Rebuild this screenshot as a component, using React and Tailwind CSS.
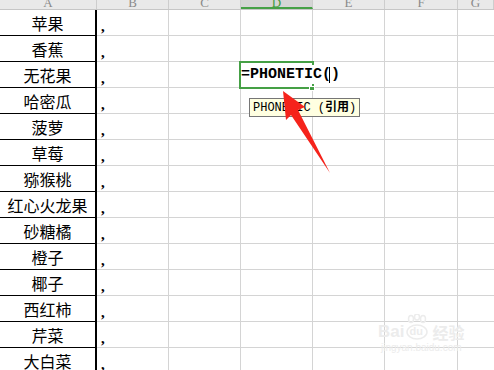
import React from "react";

const fruits = ["苹果", "香蕉", "无花果", "哈密瓜", "菠萝", "草莓", "猕猴桃", "红心火龙果", "砂糖橘", "橙子", "椰子", "西红柿", "芹菜", "大白菜"];
const cols = [
  { key: "A", w: "w-[97px]" },
  { key: "B", w: "w-[72px]" },
  { key: "C", w: "w-[72px]" },
  { key: "D", w: "w-[72px]" },
  { key: "E", w: "w-[72px]" },
  { key: "F", w: "w-[73px]" },
  { key: "G", w: "flex-1" },
];

function HeaderRow() {
  return (
    <div className="flex h-[10px] overflow-hidden border-b border-[#c6c6c6] bg-[#e9e9e9]">
      {cols.map((c) => (
        <div
          key={c.key}
          className={`${c.w} shrink-0 flex justify-center border-r border-[#cdcdcd] ${c.key === "D" ? "bg-[#d5d5d5] text-[#3f9b3f] border-b-2 border-b-[#45a045]" : "text-[#8a8a8a]"}`}
        >
          <span className="-mt-[4px] text-[13px] leading-[13px]" style={{ fontFamily: "'Liberation Serif', serif" }}>
            {c.key}
          </span>
        </div>
      ))}
    </div>
  );
}

function Row({ name }) {
  return (
    <div className="flex h-[26px]">
      <div className="w-[97px] shrink-0 border-r-2 border-b border-black flex items-center justify-center text-[16px] text-black" style={{ fontFamily: "'Noto Sans CJK SC', sans-serif" }}>
        {name}
      </div>
      <div className="w-[72px] shrink-0 border-r border-b border-[#d4d4d4] pl-[4px] flex items-center">
        <span className="font-bold text-[15px] leading-none mt-[7px]" style={{ fontFamily: "'Liberation Serif', serif" }}>,</span>
      </div>
      <div className="w-[72px] shrink-0 border-r border-b border-[#d4d4d4]" />
      <div className="w-[72px] shrink-0 border-r border-b border-[#d4d4d4]" />
      <div className="w-[72px] shrink-0 border-r border-b border-[#d4d4d4]" />
      <div className="w-[73px] shrink-0 border-r border-b border-[#d4d4d4]" />
      <div className="flex-1 border-b border-[#d4d4d4]" />
    </div>
  );
}

export default function App() {
  return (
    <div className="relative w-[494px] h-[370px] overflow-hidden bg-white">
      <HeaderRow />
      {fruits.map((f) => (
        <Row key={f} name={f} />
      ))}

      {/* active cell D3 */}
      <div className="absolute left-[239px] top-[61px] w-[75px] h-[28px] border-2 border-[#45a045]" />
      <div className="absolute left-[309px] top-[86px] w-[6px] h-[5px] bg-[#45a045] border border-white" />
      <div className="absolute left-[241px] top-[65px] flex items-center bg-white pr-[2px] text-[15px] font-bold text-black leading-[19px]" style={{ fontFamily: "'Liberation Mono', monospace" }}>
        <span>=PHONETIC(</span>
        <span className="w-px h-[16px] bg-black -ml-[2px] mr-[1px]" />
        <span>)</span>
      </div>

      {/* function hint */}
      <div className="absolute left-[249px] top-[98px] h-[19px] px-[3px] flex items-center bg-[#ffffe1] border border-[#767676] text-[12px] text-black" style={{ fontFamily: "'Liberation Mono', 'Noto Sans CJK SC', monospace" }}>
        PHONETIC (<span className="font-bold">引用</span>)
      </div>

      {/* red arrow */}
      <svg className="absolute left-0 top-0 pointer-events-none" width="494" height="370" viewBox="0 0 494 370">
        <polygon points="283,91 305,107 298,110 330,173 291,115 286,120" fill="#f5231b" />
      </svg>

      {/* watermark */}
      <div className="absolute left-[378px] top-[314px] flex flex-col items-center text-[#ececec] pointer-events-none">
        <div className="flex items-end gap-[1px]">
          <span className="text-[17px] font-bold leading-none" style={{ fontFamily: "'Liberation Sans', sans-serif" }}>Bai</span>
          <span className="relative w-[24px] h-[26px]">
            <svg width="24" height="26" viewBox="0 0 24 26" className="absolute left-0 top-0">
              <ellipse cx="6" cy="5" rx="2.5" ry="3.5" fill="none" stroke="#ececec" strokeWidth="1.5" />
              <ellipse cx="12" cy="3" rx="2.5" ry="3" fill="none" stroke="#ececec" strokeWidth="1.5" />
              <ellipse cx="18" cy="5" rx="2.5" ry="3.5" fill="none" stroke="#ececec" strokeWidth="1.5" />
              <ellipse cx="12" cy="18" rx="10" ry="7" fill="none" stroke="#ececec" strokeWidth="1.5" />
            </svg>
            <span className="absolute left-[4px] top-[12px] text-[11px] font-bold leading-none" style={{ fontFamily: "'Liberation Sans', sans-serif" }}>du</span>
          </span>
          <span className="text-[16px] font-bold leading-none ml-[2px]" style={{ fontFamily: "'Noto Sans CJK SC', sans-serif" }}>经验</span>
        </div>
        <span className="text-[10px] leading-none mt-[3px]" style={{ fontFamily: "'Liberation Sans', sans-serif" }}>jingyan.baidu.com</span>
      </div>
    </div>
  );
}
